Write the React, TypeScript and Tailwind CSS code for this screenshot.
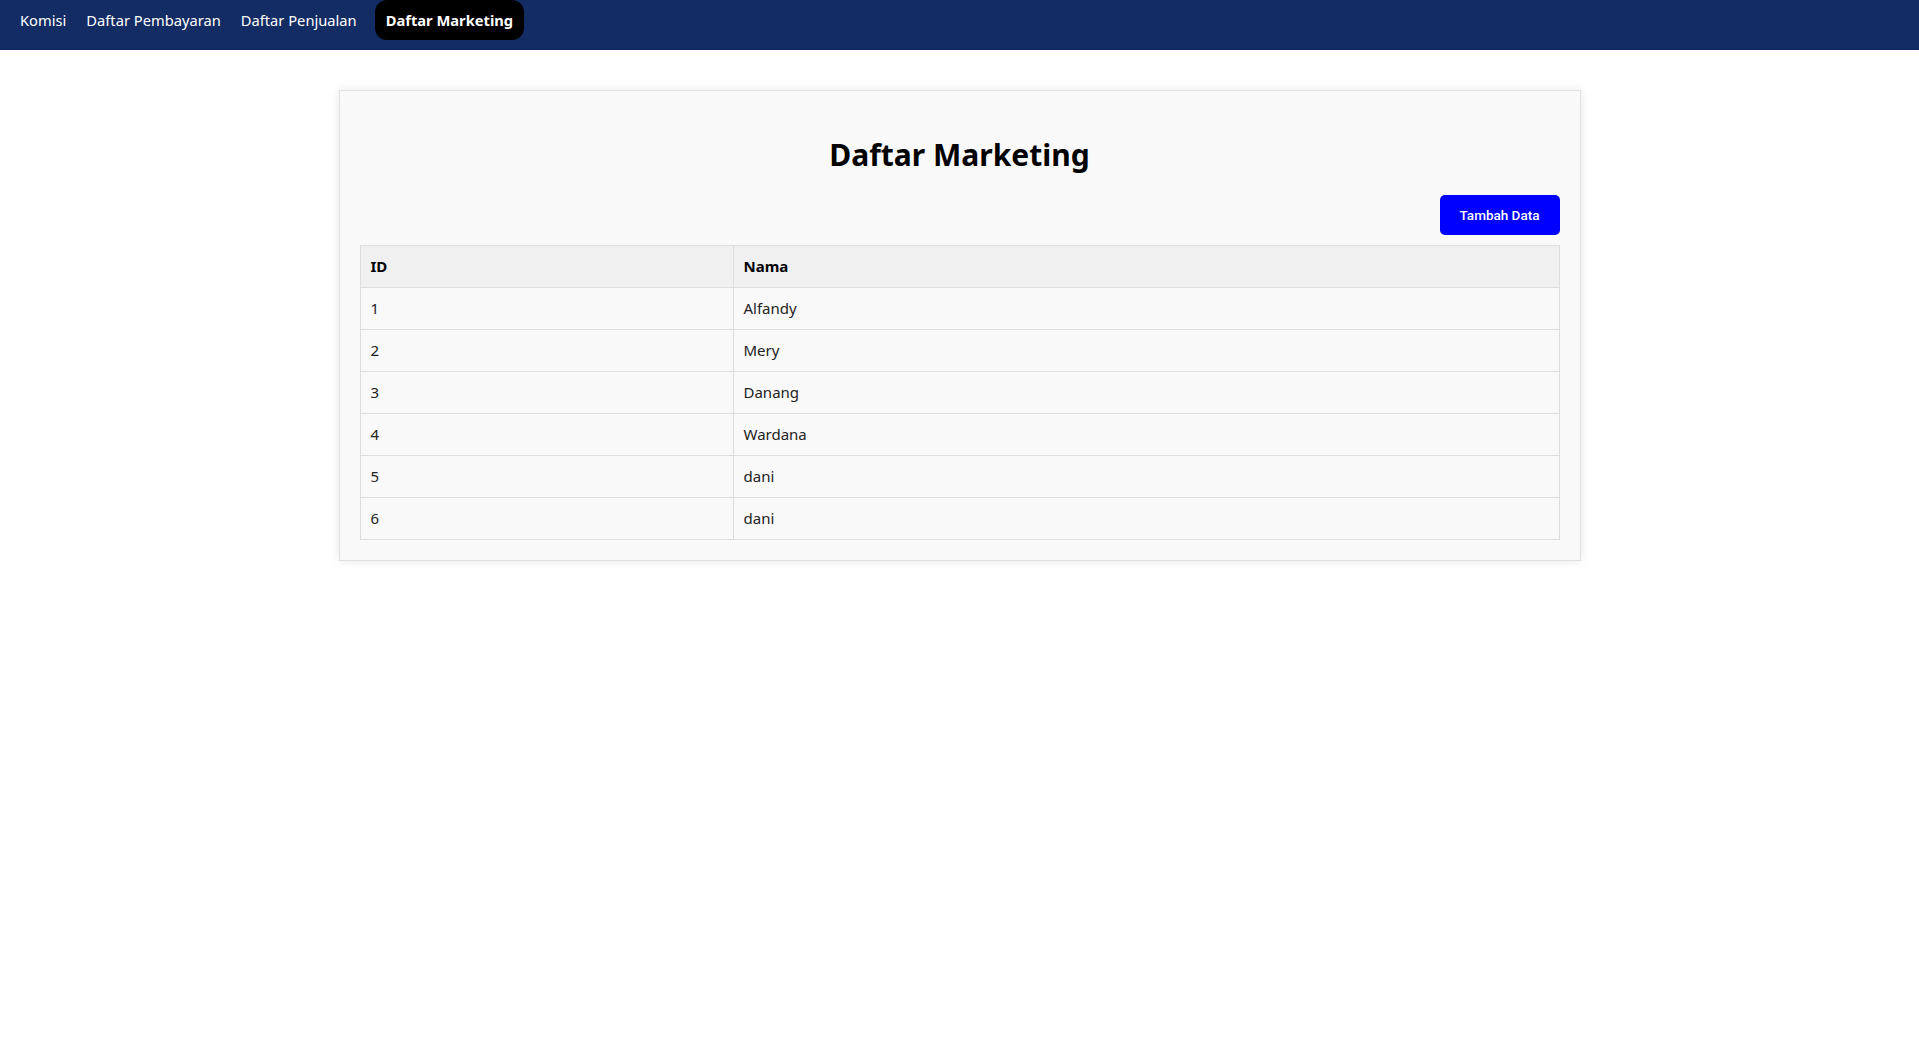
const links = ['Komisi', 'Daftar Pembayaran', 'Daftar Penjualan'];

const rows = [
  { id: 1, nama: 'Alfandy' },
  { id: 2, nama: 'Mery' },
  { id: 3, nama: 'Danang' },
  { id: 4, nama: 'Wardana' },
  { id: 5, nama: 'dani' },
  { id: 6, nama: 'dani' },
];

const Navbar = () => {
  return (
    <nav className="h-[50px] bg-[#142c64] pl-[10px] flex items-start">
      {links.map((l) => (
        <a key={l} className="h-[40px] px-[10px] flex items-center text-[14.7px] leading-[21px] text-white cursor-pointer">
          {l}
        </a>
      ))}
      <a className="h-[40px] ml-[8px] px-[11px] flex items-center rounded-[12px] bg-black text-[14.7px] leading-[21px] font-bold text-white cursor-pointer">
        Daftar Marketing
      </a>
    </nav>
  );
};

export default function App() {
  return (
    <div className="min-h-screen bg-white font-['Noto_Sans',sans-serif] text-[#222]">
      <Navbar />
      <div className="w-[1242px] mx-auto mt-[40px] bg-[#f9f9f9] border border-[#e0e0e0] shadow-[0_0_10px_rgba(0,0,0,0.1)] p-[20px]">
        <h1 className="text-center text-[30px] leading-[43px] font-bold text-black mt-[22px] mb-[19px]">Daftar Marketing</h1>
        <div className="flex justify-end mb-[10px]">
          <button className="w-[120px] h-[40px] rounded-[5px] bg-[#0000ff] text-white text-[13.5px] font-medium font-['Roboto',sans-serif]">
            Tambah Data
          </button>
        </div>
        <table className="w-full table-fixed border-collapse text-[15px] leading-[21px]">
          <colgroup>
            <col className="w-[373px]" />
            <col />
          </colgroup>
          <thead>
            <tr className="bg-[#f0f0f0]">
              <th className="border border-[#dddddd] px-[10px] py-[10px] text-left font-bold text-black">ID</th>
              <th className="border border-[#dddddd] px-[10px] py-[10px] text-left font-bold text-black">Nama</th>
            </tr>
          </thead>
          <tbody>
            {rows.map((r) => (
              <tr key={r.id}>
                <td className="border border-[#dddddd] px-[10px] py-[10px]">{r.id}</td>
                <td className="border border-[#dddddd] px-[10px] py-[10px]">{r.nama}</td>
              </tr>
            ))}
          </tbody>
        </table>
      </div>
    </div>
  );
}
